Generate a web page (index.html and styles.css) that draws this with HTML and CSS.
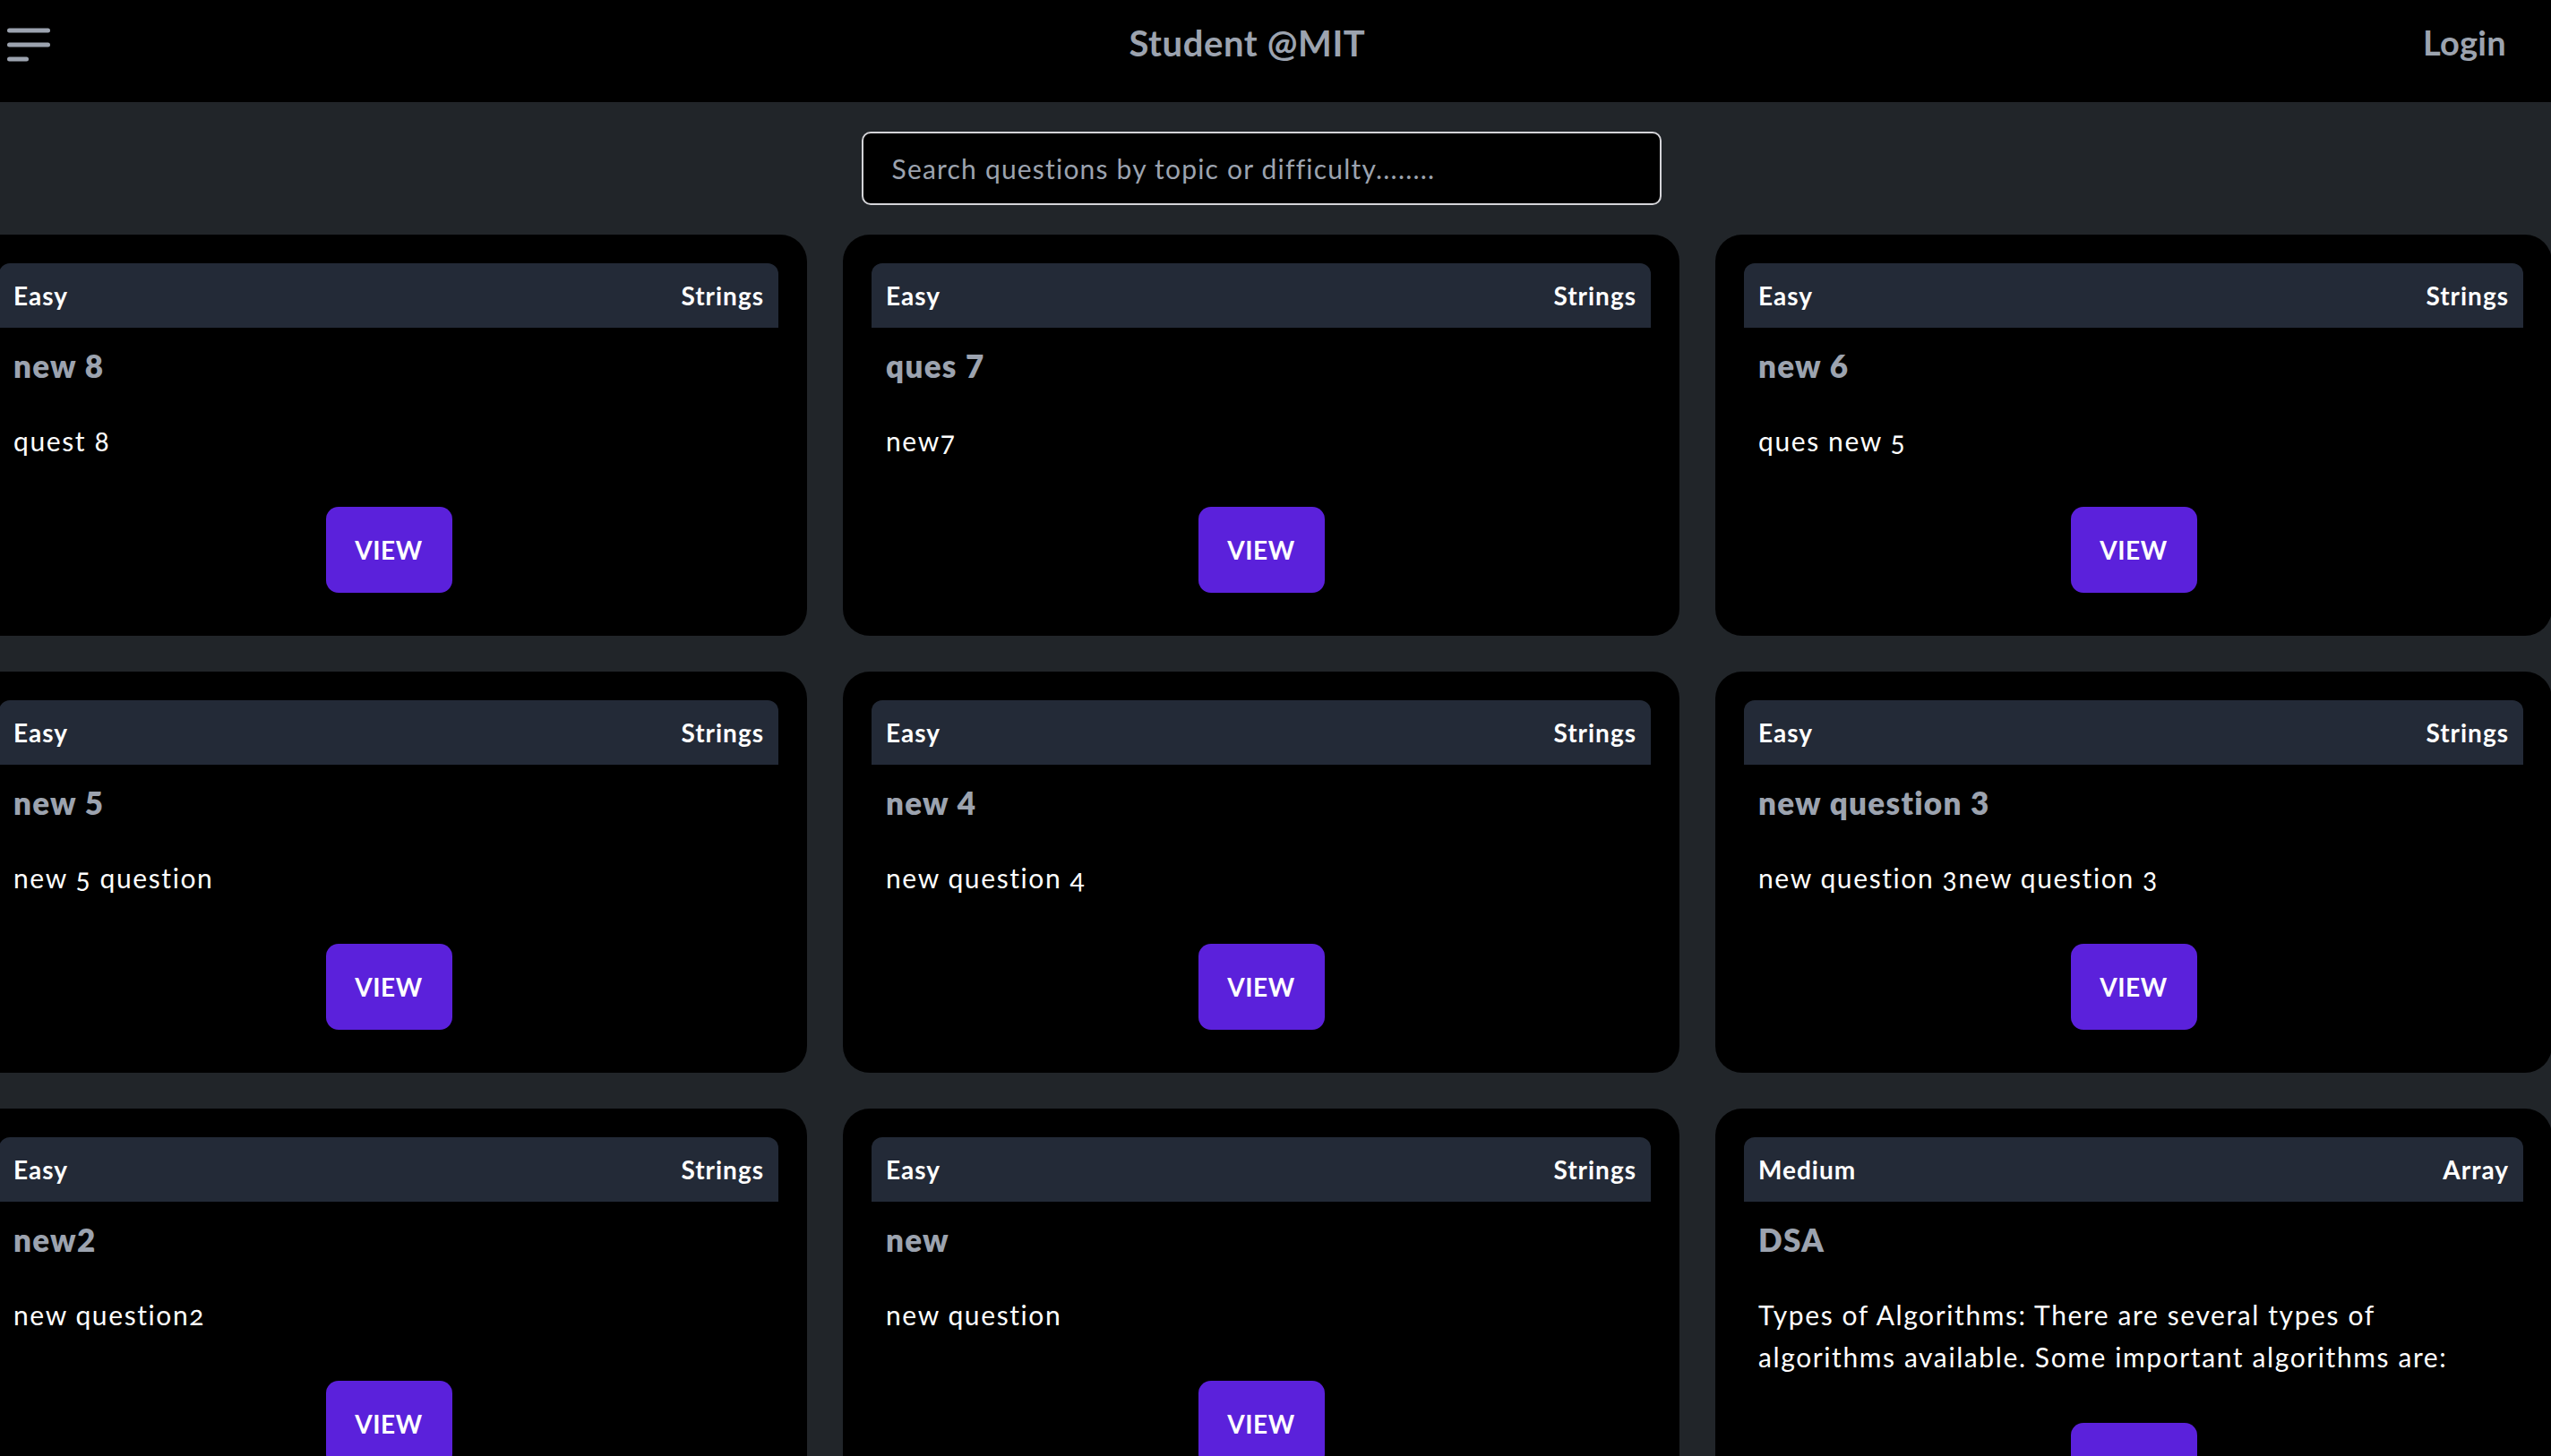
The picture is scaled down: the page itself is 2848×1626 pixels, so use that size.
FILE: index.html
```html
<!DOCTYPE html>
<html lang="en">
<head>
<meta charset="utf-8">
<title>Student @MIT</title>
<link rel="stylesheet" href="styles.css">
</head>
<body>
<header class="topbar">
  <button class="menu-btn" aria-label="Menu">
    <svg width="48" height="40" viewBox="0 0 48 40">
      <path d="M2.5 4H45.5M2.5 20H45.5M2.5 36H21.5" stroke="#9ca3af" stroke-width="5" stroke-linecap="round" fill="none"/>
    </svg>
  </button>
  <div class="brand">Student @MIT</div>
  <a class="login" href="#">Login</a>
</header>
<main class="main">
  <div class="search-wrap">
    <input class="search" type="text" placeholder="Search questions by topic or difficulty........">
  </div>
  <section class="grid">
    <article class="card">
      <div class="card-head"><span>Easy</span><span>Strings</span></div>
      <div class="card-body">
        <h2 class="card-title">new 8</h2>
        <p class="card-desc">quest 8</p>
      </div>
      <button class="view-btn">VIEW</button>
    </article>
    <article class="card">
      <div class="card-head"><span>Easy</span><span>Strings</span></div>
      <div class="card-body">
        <h2 class="card-title">ques 7</h2>
        <p class="card-desc">new7</p>
      </div>
      <button class="view-btn">VIEW</button>
    </article>
    <article class="card">
      <div class="card-head"><span>Easy</span><span>Strings</span></div>
      <div class="card-body">
        <h2 class="card-title">new 6</h2>
        <p class="card-desc">ques new 5</p>
      </div>
      <button class="view-btn">VIEW</button>
    </article>
    <article class="card">
      <div class="card-head"><span>Easy</span><span>Strings</span></div>
      <div class="card-body">
        <h2 class="card-title">new 5</h2>
        <p class="card-desc">new 5 question</p>
      </div>
      <button class="view-btn">VIEW</button>
    </article>
    <article class="card">
      <div class="card-head"><span>Easy</span><span>Strings</span></div>
      <div class="card-body">
        <h2 class="card-title">new 4</h2>
        <p class="card-desc">new question 4</p>
      </div>
      <button class="view-btn">VIEW</button>
    </article>
    <article class="card">
      <div class="card-head"><span>Easy</span><span>Strings</span></div>
      <div class="card-body">
        <h2 class="card-title">new question 3</h2>
        <p class="card-desc">new question 3new question 3</p>
      </div>
      <button class="view-btn">VIEW</button>
    </article>
    <article class="card">
      <div class="card-head"><span>Easy</span><span>Strings</span></div>
      <div class="card-body">
        <h2 class="card-title">new2</h2>
        <p class="card-desc">new question2</p>
      </div>
      <button class="view-btn">VIEW</button>
    </article>
    <article class="card">
      <div class="card-head"><span>Easy</span><span>Strings</span></div>
      <div class="card-body">
        <h2 class="card-title">new</h2>
        <p class="card-desc">new question</p>
      </div>
      <button class="view-btn">VIEW</button>
    </article>
    <article class="card">
      <div class="card-head"><span>Medium</span><span>Array</span></div>
      <div class="card-body">
        <h2 class="card-title">DSA</h2>
        <p class="card-desc card-desc-long">Types of Algorithms: There are several types of algorithms available. Some important algorithms are:</p>
      </div>
      <button class="view-btn">VIEW</button>
    </article>
  </section>
</main>
</body>
</html>
```
FILE: styles.css
```css
* { box-sizing: border-box; }

html, body {
  margin: 0;
  padding: 0;
  background: #212529;
  font-family: "Lato", "Open Sans", sans-serif;
  overflow-x: hidden;
}

.topbar {
  height: 114px;
  background: #000;
  display: flex;
  justify-content: space-between;
  align-items: flex-start;
  padding: 24px 50px 0 8px;
}

.menu-btn {
  margin: 6px 0 0 0;
  padding: 0;
  border: 0;
  background: transparent;
  width: 48px;
  height: 40px;
  display: block;
}
.menu-btn svg { display: block; }

.brand {
  font-size: 40px;
  line-height: 48px;
  font-weight: 700;
  color: #9ca3af;
  letter-spacing: 0.6px;
  margin-left: 24px;
}

.login {
  font-size: 38px;
  line-height: 46px;
  font-weight: 700;
  color: #9ca3af;
  text-decoration: none;
  letter-spacing: 0.3px;
}

.main {
  width: calc(100% - 32px);
}

.search-wrap {
  display: flex;
  justify-content: center;
  padding: 33px 0;
}

.search {
  width: 893px;
  height: 82px;
  background: #000;
  border: 2px solid #d4d4d8;
  border-radius: 10px;
  padding: 0 32px;
  font-family: "Lato", sans-serif;
  font-size: 30px;
  color: #e5e7eb;
  outline: none;
  letter-spacing: 1.2px;
}
.search::placeholder { color: #9ca3af; }

.grid {
  display: grid;
  grid-template-columns: repeat(3, 1fr);
  gap: 40px;
  margin: 0 -33px;
}

.card {
  background: #000;
  border-radius: 30px;
  padding: 32px 32px 48px;
  display: flex;
  flex-direction: column;
}

.card-head {
  height: 72px;
  background: #232a37;
  border-radius: 12px 12px 0 0;
  display: flex;
  justify-content: space-between;
  align-items: center;
  padding: 0 16px;
  color: #fff;
  font-size: 28px;
  font-weight: 700;
  letter-spacing: 1px;
}

.card-body {
  padding: 0 16px;
}

.card-title {
  margin: 18px 0 0;
  font-size: 35px;
  line-height: 48px;
  font-weight: 800;
  color: #9ca3af;
  letter-spacing: 1.3px;
}

.card-desc {
  margin: 37px 0 0;
  font-size: 30px;
  line-height: 47px;
  color: #fff;
  font-weight: 400;
  letter-spacing: 1.6px;
  font-variant-numeric: oldstyle-nums;
}

.card-desc-long { max-width: 810px; }

.view-btn {
  align-self: center;
  margin-top: 50px;
  width: 141px;
  height: 96px;
  border: 0;
  border-radius: 14px;
  background: #5b21db;
  color: #fff;
  font-family: "Lato", sans-serif;
  font-size: 28px;
  font-weight: 700;
  letter-spacing: 0.5px;
  padding: 0;
}
```
